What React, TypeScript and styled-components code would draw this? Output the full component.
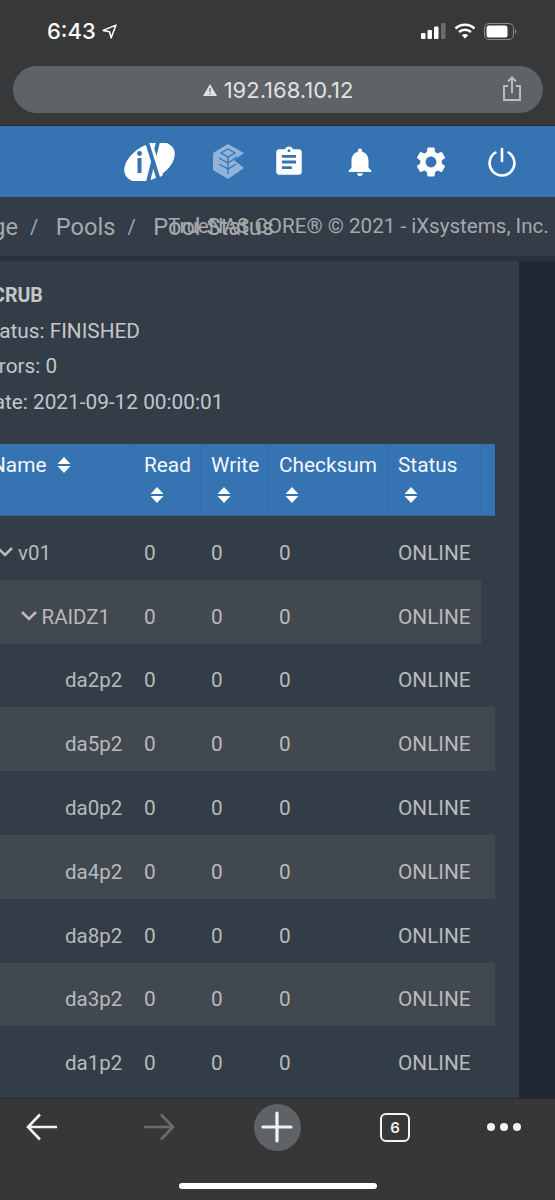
import { FC } from 'react';
import styled, { createGlobalStyle } from 'styled-components';
import { MdAssignment, MdNotifications, MdSettings } from 'react-icons/md';

const GlobalStyle = createGlobalStyle`
  html, body {
    margin: 0;
    padding: 0;
    background: #373737;
  }
  body {
    font-family: Roboto, "Liberation Sans", sans-serif;
    overflow: hidden;
  }
`;

const Phone = styled.div`
  width: 555px;
  height: 1200px;
  display: flex;
  flex-direction: column;
  overflow: hidden;
`;

/* browser chrome */
const TopChrome = styled.header`
  height: 126px;
  flex: none;
  box-sizing: border-box;
  background: #37383a;
  border-bottom: 1px solid #2a2c30;
  padding: 0 12px 0 13px;
`;

const StatusBar = styled.div`
  height: 66px;
  display: flex;
  align-items: center;
  justify-content: space-between;
  padding: 0 26px 4px 34px;
  box-sizing: border-box;
`;

const Clock = styled.div`
  display: flex;
  align-items: center;
  gap: 6px;
  color: #fff;
  font-family: Inter, Roboto, sans-serif;
  font-size: 22px;
  font-weight: 500;
`;

const StatusIcons = styled.div`
  display: flex;
  align-items: center;
  gap: 8px;
`;

const UrlBar = styled.div`
  height: 47px;
  border-radius: 24px;
  background: #5f6367;
  position: relative;
  display: flex;
  align-items: center;
  justify-content: center;
  gap: 7px;
  color: #e0e1e2;
  font-family: Inter, Roboto, sans-serif;
  font-size: 22px;
`;

const ShareIcon = styled.svg`
  position: absolute;
  right: 21px;
  top: 10px;
`;

/* blue app toolbar */
const AppBar = styled.div`
  height: 71px;
  flex: none;
  background: #3573b3;
  display: flex;
  align-items: center;
  padding: 0 0 0 124px;
`;

const LogoSlot = styled.div`
  width: 88px;
  flex: none;
  display: flex;
`;

const ToolIcon = styled.div<{ $width: number }>`
  width: ${({ $width }) => $width}px;
  flex: none;
  display: flex;
  align-items: center;
  justify-content: center;
  color: #fff;
`;

const Breadcrumbs = styled.div`
  height: 59px;
  flex: none;
  background: #333c47;
  position: relative;
  display: flex;
  align-items: center;
  color: #a6a9ac;
  font-size: 23.6px;
  white-space: nowrap;
  overflow: hidden;
`;

const Crumbs = styled.div`
  display: flex;
  gap: 15px;
  margin-left: -63px;
  padding-top: 1px;
`;

const Slash = styled.span`
  font-size: 20px;
  line-height: 28px;
  margin: 0 2.5px 0 -3px;
`;

const Copyright = styled.div`
  position: absolute;
  left: 168px;
  top: 17px;
  font-size: 20.6px;
  color: #a6a9ac;
`;

/* main area */
const Content = styled.div`
  flex: 1;
  min-height: 0;
  background: #222833;
  border-top: 5px solid #2a313b;
  overflow: hidden;
`;

const Card = styled.div`
  width: 519px;
  height: 100%;
  background: #333d48;
  overflow: hidden;
`;

const Scroller = styled.div`
  margin-left: -12px;
  width: 507px;
`;

const ScrubInfo = styled.div`
  padding: 23px 0 0;
  margin-left: -8px;
  height: 183px;
  box-sizing: border-box;
  color: #c4c6c8;
  font-size: 20.8px;
`;

const ScrubLine = styled.div<{ $bold?: boolean }>`
  height: 35.5px;
  line-height: 23px;
  font-weight: ${({ $bold }) => ($bold ? 700 : 400)};
  font-size: ${({ $bold }) => ($bold ? '19.6px' : 'inherit')};
`;

const HeaderRow = styled.div`
  display: grid;
  grid-template-columns: 146px 67px 68px 119px 93px 14px;
  height: 72px;
  background: #3573b3;
  color: #f4f7fa;
  font-size: 20.8px;
  border-bottom: 1px solid #2e659d;
  box-sizing: border-box;
`;

const HeaderCell = styled.div<{ $first?: boolean }>`
  padding: 10px 0 0 ${({ $first }) => ($first ? 3 : 10)}px;
  border-right: 1px solid #326dab;
  box-sizing: border-box;
  line-height: 23px;
`;

const SortIcon = styled.svg<{ $inline?: boolean }>`
  display: ${({ $inline }) => ($inline ? 'inline-block' : 'block')};
  margin: ${({ $inline }) => ($inline ? '0 0 3px 11px' : '10px 0 0 6px')};
  vertical-align: middle;
`;

const Row = styled.div<{ $shaded: boolean; $narrow: boolean }>`
  display: grid;
  grid-template-columns: 146px 67px 68px 119px 93px;
  height: 63.8px;
  padding-top: 10px;
  box-sizing: border-box;
  align-items: center;
  width: ${({ $narrow }) => ($narrow ? '493px' : '507px')};
  background: ${({ $shaded }) => ($shaded ? '#41484f' : 'transparent')};
  color: #b8babc;
  font-size: 20.8px;
`;

const Cell = styled.div`
  padding-left: 10px;
`;

const NameCell = styled.div<{ $depth: number }>`
  display: flex;
  align-items: center;
  padding-left: ${({ $depth }) => $depth * 23.5 + 30}px;
  font-size: 20.5px;
  position: relative;
`;

const Chevron = styled.svg<{ $depth: number }>`
  position: absolute;
  left: ${({ $depth }) => $depth * 24 + 8}px;
  top: 5px;
`;

/* browser toolbar */
const BottomChrome = styled.footer`
  height: 102px;
  flex: none;
  background: #373737;
  border-top: 1px solid #25272a;
  box-sizing: border-box;
  display: flex;
  flex-direction: column;
  align-items: center;
`;

const NavRow = styled.div`
  width: 100%;
  height: 56px;
  display: grid;
  grid-template-columns: 83px 152px 84px 152px 66px;
  align-items: center;
  justify-items: center;
`;

const PlusButton = styled.div`
  width: 47px;
  height: 47px;
  border-radius: 50%;
  background: #5f6367;
  display: flex;
  align-items: center;
  justify-content: center;
`;

const TabCount = styled.div`
  width: 26px;
  height: 25px;
  border: 2.5px solid #f2f2f2;
  border-radius: 6px;
  display: flex;
  align-items: center;
  justify-content: center;
  color: #f2f2f2;
  font-family: Inter, Roboto, sans-serif;
  font-size: 15px;
  font-weight: 600;
`;

const Dots = styled.div`
  display: flex;
  gap: 5px;
`;

const Dot = styled.span`
  width: 8px;
  height: 8px;
  border-radius: 50%;
  background: #f2f2f2;
`;

const HomeBar = styled.div`
  width: 198px;
  height: 6px;
  border-radius: 3px;
  background: #fff;
  margin-top: 28px;
`;

const DEVICES: { name: string; depth: number }[] = [
  { name: 'v01', depth: 0 },
  { name: 'RAIDZ1', depth: 1 },
  { name: 'da2p2', depth: 2 },
  { name: 'da5p2', depth: 2 },
  { name: 'da0p2', depth: 2 },
  { name: 'da4p2', depth: 2 },
  { name: 'da8p2', depth: 2 },
  { name: 'da3p2', depth: 2 },
  { name: 'da1p2', depth: 2 },
];

const IxLogo = () => (
  <svg width="52" height="38" viewBox="0 0 52 38">
    <ellipse cx="25.5" cy="19" rx="27.5" ry="17" fill="#fff" transform="rotate(-30 25.5 19)" />
    <path d="M32 -1 L36 -1 L26 39 L22 39 Z" fill="#3573b3" />
    <path d="M21 -1 L28 -1 L39 34 L33 38 Z" fill="#3573b3" />
    <path d="M25 -1 L28 -1 L39 32 L36 34 Z" fill="#fff" />
    <rect x="13.5" y="15" width="4" height="15" fill="#3573b3" />
    <circle cx="15.5" cy="10.5" r="2.4" fill="#3573b3" />
  </svg>
);

const CommandLogo = () => (
  <svg width="32" height="35" viewBox="0 0 32 35">
    <path d="M15 0 L31 9 L21 16 L31 24 L15 35 L0 26 L0 9 Z" fill="#8fb4da" />
    <path
      d="M15 5 L22 9 L15 13 L8 9 Z M6 14 L15 19 L24 13 M6 20 L15 25 L23 20 M15 13 V30"
      fill="none"
      stroke="#3573b3"
      strokeWidth="1.3"
    />
  </svg>
);

const PowerIcon = () => (
  <svg width="30" height="30" viewBox="0 0 30 30" fill="none" stroke="#fff" strokeWidth="2.6" strokeLinecap="round">
    <path d="M15 2 V14" />
    <path d="M8.5 5.5 A12.4 12.4 0 1 0 21.5 5.5" />
  </svg>
);

const SortGlyph = ({ inline }: { inline?: boolean }) => (
  <SortIcon $inline={inline} width="14" height="16" viewBox="0 0 14 16" fill="#fff">
    <path d="M7 0 L13.5 7 H0.5 Z M7 16 L0.5 9 H13.5 Z" />
  </SortIcon>
);

const App: FC = () => (
  <Phone>
    <GlobalStyle />
    <TopChrome>
      <StatusBar>
        <Clock>
          6:43
          <svg width="15" height="15" viewBox="0 0 14 14" fill="none" stroke="#fff" strokeWidth="1.4" strokeLinejoin="round">
            <path d="M13 1 L1 6 L7 7.2 L8.5 13 Z" />
          </svg>
        </Clock>
        <StatusIcons>
          <svg width="25" height="16" viewBox="0 0 25 16">
            <rect x="0" y="10" width="4.5" height="6" rx="1" fill="#fff" />
            <rect x="6.5" y="7" width="4.5" height="9" rx="1" fill="#fff" />
            <rect x="13" y="3.5" width="4.5" height="12.5" rx="1" fill="#fff" />
            <rect x="20" y="0" width="4.5" height="16" rx="1" fill="#6a6c6e" />
          </svg>
          <svg width="22" height="16" viewBox="0 0 22 16" fill="none" stroke="#fff" strokeWidth="2.4">
            <path d="M1.5 5.5 A14 14 0 0 1 20.5 5.5" />
            <path d="M5 9 A9 9 0 0 1 17 9" />
            <path d="M11 15.5 L7.8 12.3 A5 5 0 0 1 14.2 12.3 Z" fill="#fff" stroke="none" />
          </svg>
          <svg width="33" height="17" viewBox="0 0 33 17">
            <rect x="0.5" y="0.5" width="29" height="16" rx="4.5" fill="none" stroke="#8a8b8d" />
            <rect x="2.5" y="2.5" width="21" height="12" rx="2.5" fill="#fff" />
            <path d="M31 6 A3 3 0 0 1 31 11 Z" fill="#8a8b8d" />
          </svg>
        </StatusIcons>
      </StatusBar>
      <UrlBar>
        <svg width="14" height="12" viewBox="0 0 14 12">
          <path d="M7 0 L14 12 L0 12 Z" fill="#e0e1e2" />
          <path d="M7 4 V8 M7 9.2 V10.6" stroke="#5f6367" strokeWidth="1.2" />
        </svg>
        192.168.10.12
        <ShareIcon width="20" height="26" viewBox="0 0 20 26" fill="none" stroke="#b9bbbd" strokeWidth="2">
          <path d="M6 10 H2 V24 H18 V10 H14" />
          <path d="M10 17 V2 M6 5.5 L10 1.5 L14 5.5" />
        </ShareIcon>
      </UrlBar>
    </TopChrome>

    <AppBar>
      <LogoSlot>
        <IxLogo />
      </LogoSlot>
      <ToolIcon $width={34}>
        <CommandLogo />
      </ToolIcon>
      <ToolIcon $width={86}>
        <MdAssignment size={34} />
      </ToolIcon>
      <ToolIcon $width={56}>
        <MdNotifications size={34} />
      </ToolIcon>
      <ToolIcon $width={86}>
        <MdSettings size={36} />
      </ToolIcon>
      <ToolIcon $width={56}>
        <PowerIcon />
      </ToolIcon>
    </AppBar>

    <Breadcrumbs>
      <Crumbs>
        <span>Storage</span>
        <Slash>/</Slash>
        <span>Pools</span>
        <Slash>/</Slash>
        <span>Pool Status</span>
      </Crumbs>
      <Copyright>TrueNAS CORE® © 2021 - iXsystems, Inc.</Copyright>
    </Breadcrumbs>

    <Content>
      <Card>
        <Scroller>
          <ScrubInfo>
            <ScrubLine $bold>SCRUB</ScrubLine>
            <ScrubLine>Status: FINISHED</ScrubLine>
            <ScrubLine>Errors: 0</ScrubLine>
            <ScrubLine>Date: 2021-09-12 00:00:01</ScrubLine>
          </ScrubInfo>
          <HeaderRow>
            <HeaderCell $first>
              Name
              <SortGlyph inline />
            </HeaderCell>
            {['Read', 'Write', 'Checksum', 'Status'].map(label => (
              <HeaderCell key={label}>
                {label}
                <SortGlyph />
              </HeaderCell>
            ))}
            <HeaderCell />
          </HeaderRow>
          {DEVICES.map(({ name, depth }, index) => (
            <Row key={name} $shaded={index % 2 === 1} $narrow={index === 1}>
              <NameCell $depth={depth}>
                {depth < 2 && (
                  <Chevron
                    $depth={depth}
                    width="18"
                    height="12"
                    viewBox="0 0 18 12"
                    fill="none"
                    stroke="#b8babc"
                    strokeWidth="2.6"
                  >
                    <path d="M2 2 L9 9 L16 2" />
                  </Chevron>
                )}
                {name}
              </NameCell>
              <Cell>0</Cell>
              <Cell>0</Cell>
              <Cell>0</Cell>
              <Cell>ONLINE</Cell>
            </Row>
          ))}
        </Scroller>
      </Card>
    </Content>

    <BottomChrome>
      <NavRow>
        <svg width="32" height="28" viewBox="0 0 32 28" fill="none" stroke="#f2f2f2" strokeWidth="2.6">
          <path d="M31 14 H2 M14 1.5 L2 14 L14 26.5" />
        </svg>
        <svg width="32" height="28" viewBox="0 0 32 28" fill="none" stroke="#6b6b6b" strokeWidth="2.6">
          <path d="M1 14 H30 M18 1.5 L30 14 L18 26.5" />
        </svg>
        <PlusButton>
          <svg width="32" height="32" viewBox="0 0 32 32" fill="none" stroke="#f2f2f2" strokeWidth="3.2" strokeLinecap="round">
            <path d="M16 2 V30 M2 16 H30" />
          </svg>
        </PlusButton>
        <TabCount>6</TabCount>
        <Dots>
          <Dot />
          <Dot />
          <Dot />
        </Dots>
      </NavRow>
      <HomeBar />
    </BottomChrome>
  </Phone>
);

export default App;
